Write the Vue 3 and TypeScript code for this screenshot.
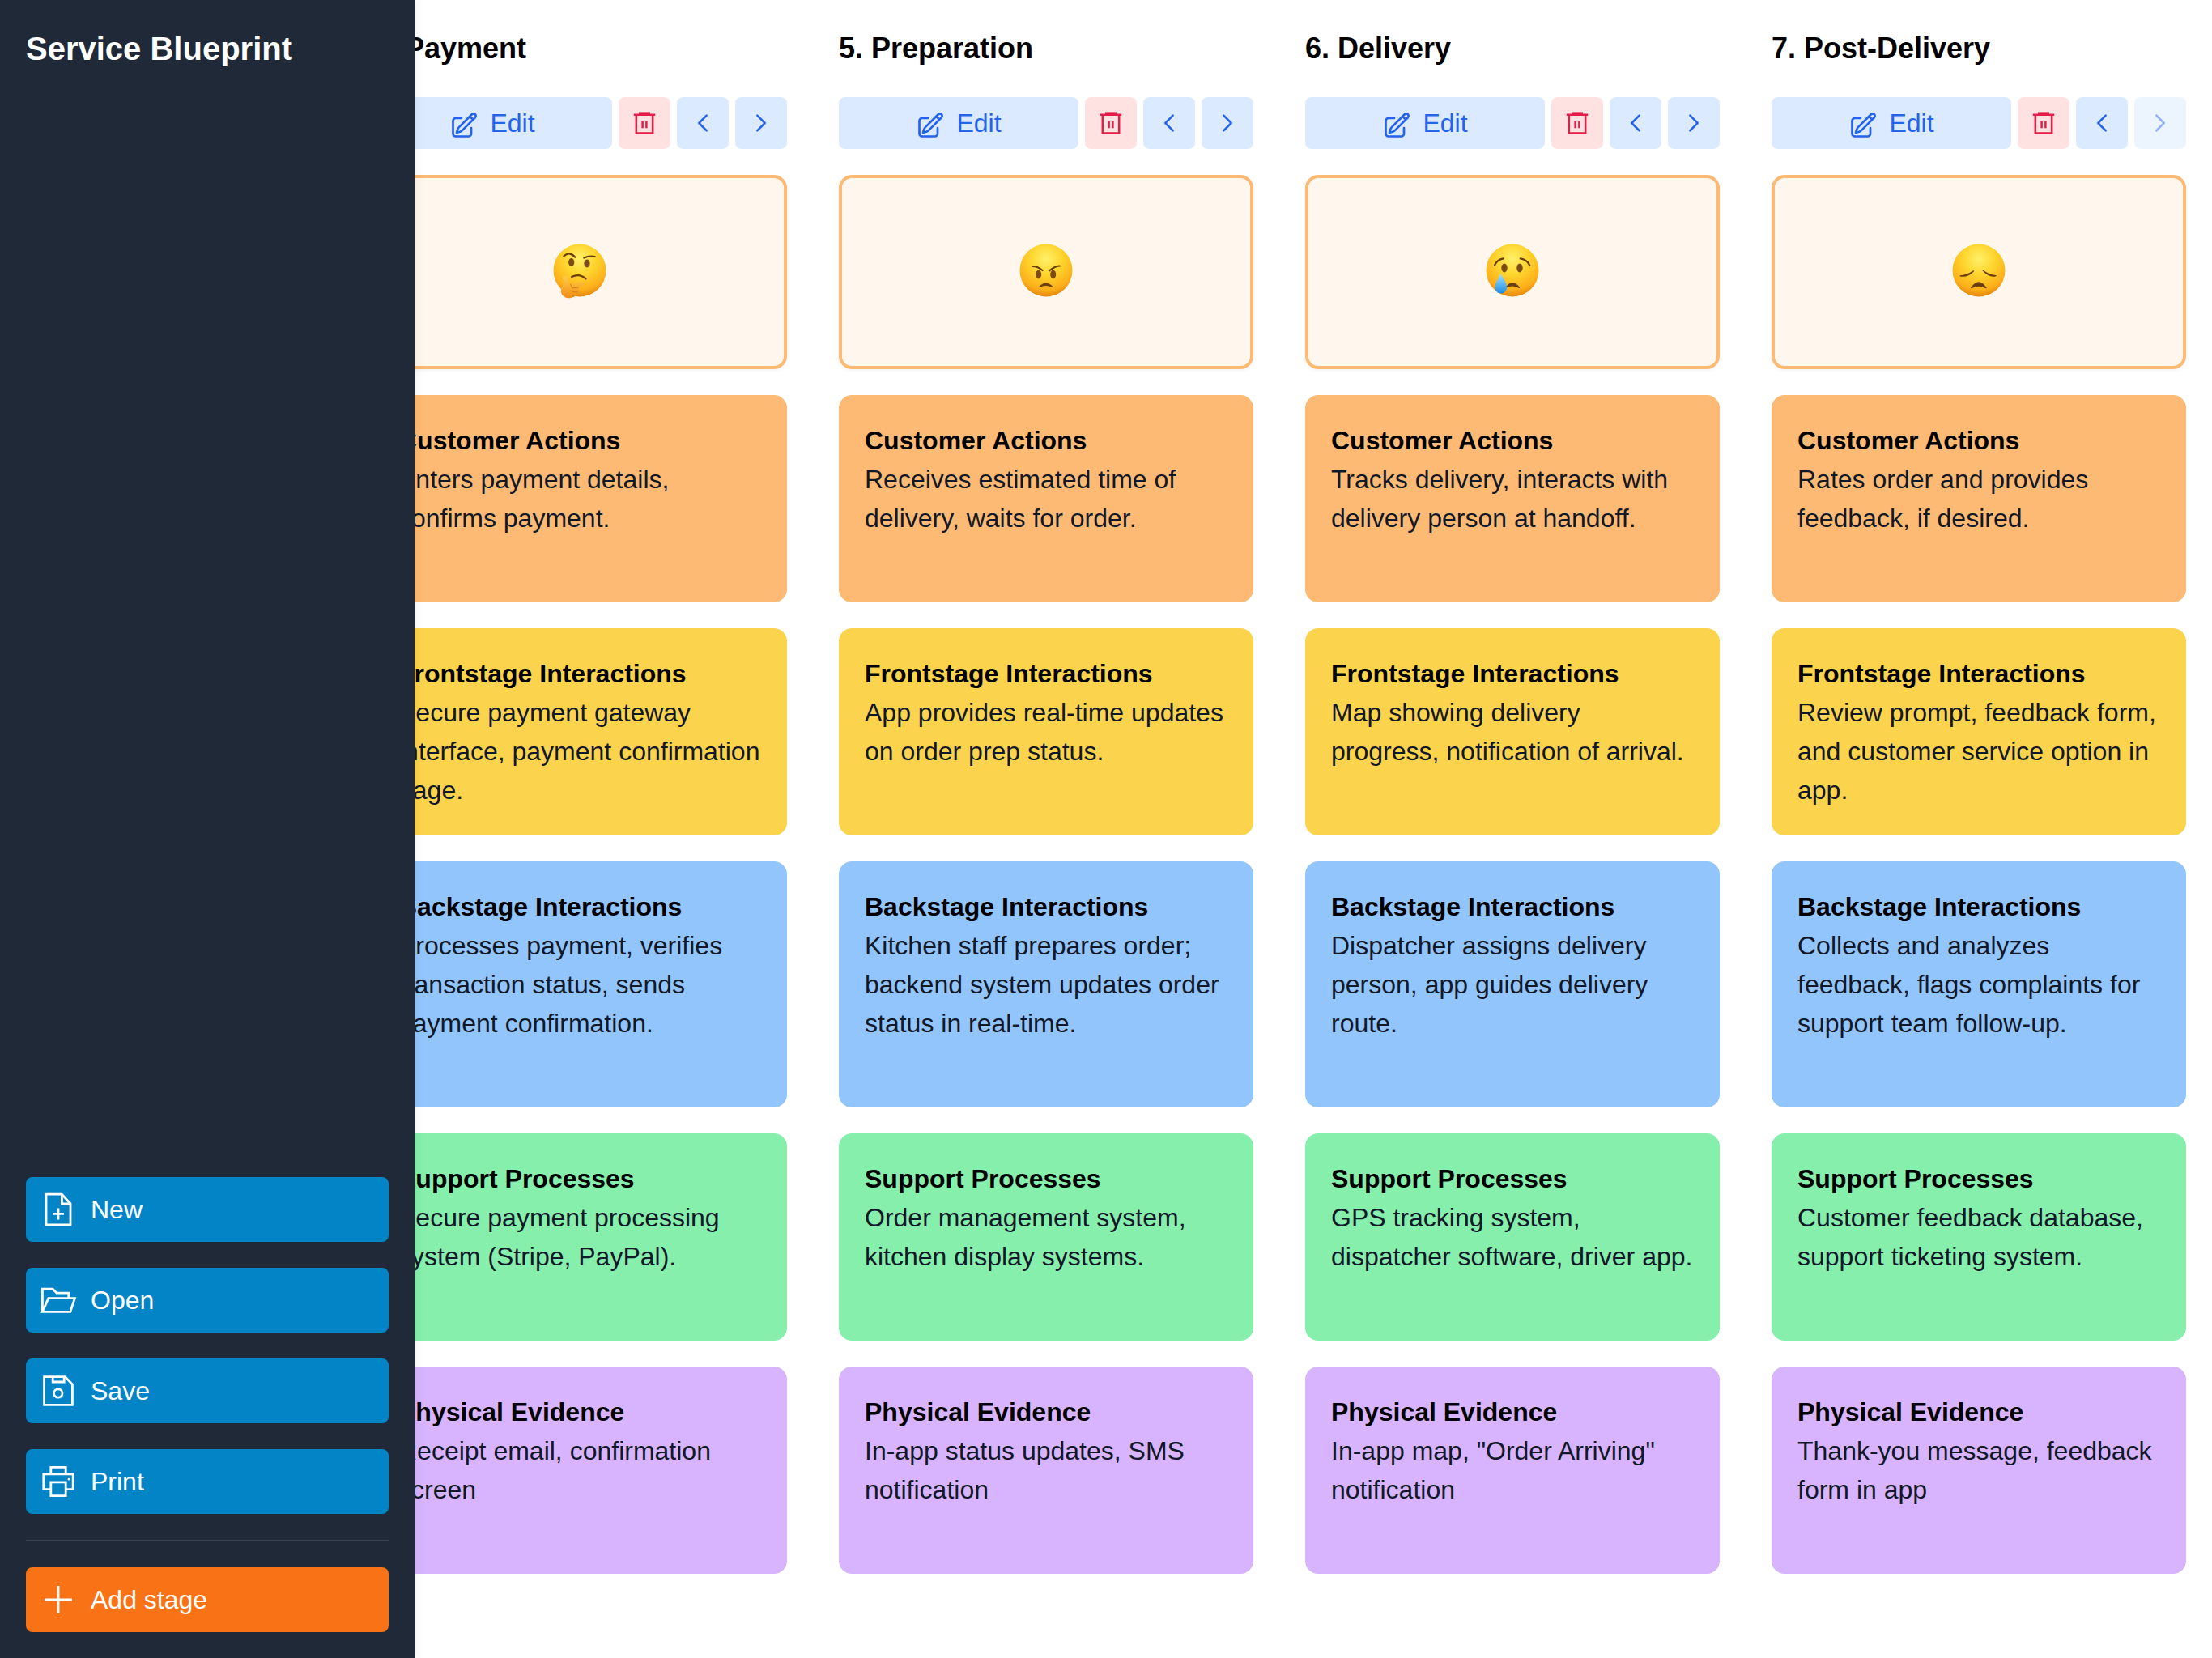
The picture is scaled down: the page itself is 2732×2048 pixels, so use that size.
<script setup lang="ts">
type Mood = 'thinking' | 'angry' | 'crying' | 'sad';

interface Stage {
  title: string;
  mood: Mood;
  last?: boolean;
  notes: string[];
}

const lanes = [
  { key: 'customer', label: 'Customer Actions' },
  { key: 'frontstage', label: 'Frontstage Interactions' },
  { key: 'backstage', label: 'Backstage Interactions' },
  { key: 'support', label: 'Support Processes' },
  { key: 'evidence', label: 'Physical Evidence' },
];

const stages: Stage[] = [
  {
    title: '4. Payment',
    mood: 'thinking',
    notes: [
      'Enters payment details, confirms payment.',
      'Secure payment gateway interface, payment confirmation page.',
      'Processes payment, verifies transaction status, sends payment confirmation.',
      'Secure payment processing system (Stripe, PayPal).',
      'Receipt email, confirmation screen',
    ],
  },
  {
    title: '5. Preparation',
    mood: 'angry',
    notes: [
      'Receives estimated time of delivery, waits for order.',
      'App provides real-time updates on order prep status.',
      'Kitchen staff prepares order; backend system updates order status in real-time.',
      'Order management system, kitchen display systems.',
      'In-app status updates, SMS notification',
    ],
  },
  {
    title: '6. Delivery',
    mood: 'crying',
    notes: [
      'Tracks delivery, interacts with delivery person at handoff.',
      'Map showing delivery progress, notification of arrival.',
      'Dispatcher assigns delivery person, app guides delivery route.',
      'GPS tracking system, dispatcher software, driver app.',
      'In-app map, "Order Arriving" notification',
    ],
  },
  {
    title: '7. Post-Delivery',
    mood: 'sad',
    last: true,
    notes: [
      'Rates order and provides feedback, if desired.',
      'Review prompt, feedback form, and customer service option in app.',
      'Collects and analyzes feedback, flags complaints for support team follow-up.',
      'Customer feedback database, support ticketing system.',
      'Thank-you message, feedback form in app',
    ],
  },
];
</script>

<template>
  <div class="app">
    <aside class="sidebar">
      <h1 class="brand">Service Blueprint</h1>
      <div class="side-actions">
        <button class="side-btn">
          <svg class="side-icon" viewBox="0 0 24 24">
            <path d="M4.5 2.6H14.2L19.5 8.4V21.4H4.5Z" />
            <path d="M14.2 2.6V8.4H19.5" />
            <path d="M12 11.2V18.2M8.5 14.7H15.5" />
          </svg>
          New
        </button>
        <button class="side-btn">
          <svg class="side-icon" viewBox="0 0 24 24">
            <path d="M2.2 19.2V5.1H8.6L11 7.6H18.4V10.8" />
            <path d="M2.2 19.2L5.9 10.8H22.2L19.4 19.2Z" />
          </svg>
          Open
        </button>
        <button class="side-btn">
          <svg class="side-icon" viewBox="0 0 24 24">
            <path d="M3.3 3.3H16.2L20.7 8V20.7H3.3Z" />
            <path d="M8.6 3.3V6.5H15.6V3.3" />
            <circle cx="11.9" cy="13.5" r="2.6" />
          </svg>
          Save
        </button>
        <button class="side-btn">
          <svg class="side-icon" viewBox="0 0 24 24">
            <path d="M7.4 7.4V3.2H16.6V7.4" />
            <path d="M7.4 16.8H2.9V7.4H21.1V16.8H16.6" />
            <path d="M7.4 12.4H16.6V20.8H7.4Z" />
            <circle class="dot" cx="18.5" cy="10.6" r="0.7" />
          </svg>
          Print
        </button>
        <hr class="side-rule" />
        <button class="side-btn add">
          <svg class="side-icon" viewBox="0 0 24 24">
            <path d="M12 3.5V20.5M3.5 12H20.5" />
          </svg>
          Add stage
        </button>
      </div>
    </aside>

    <main class="board">
      <section v-for="stage in stages" :key="stage.title" class="stage">
        <h2 class="stage-title">{{ stage.title }}</h2>

        <div class="toolbar">
          <button class="tool edit">
            <svg class="edit-icon" viewBox="0 0 24 24">
              <path d="M16.862 4.487l1.687-1.688a1.875 1.875 0 112.652 2.652L10.582 16.07a4.5 4.5 0 01-1.897 1.13L6 18l.8-2.685a4.5 4.5 0 011.13-1.897l8.932-8.931zm0 0L19.5 7.125M18 14v4.75A2.25 2.25 0 0115.75 21H5.25A2.25 2.25 0 013 18.75V8.25A2.25 2.25 0 015.25 6H10" />
            </svg>
            Edit
          </button>
          <button class="tool remove">
            <svg class="trash-icon" viewBox="0 0 32 32">
              <path class="lid" d="M9 2.4H23V5H9Z" />
              <path d="M2.8 5.8H29.2M5.8 5.8V28.6H26.2V5.8M13.6 13V22.2M18.4 13V22.2" />
            </svg>
          </button>
          <button class="tool">
            <svg class="chevron" viewBox="0 0 24 24"><path d="M15.75 19.5L8.25 12l7.5-7.5" /></svg>
          </button>
          <button class="tool" :class="{ disabled: stage.last }">
            <svg class="chevron" viewBox="0 0 24 24"><path d="M8.25 4.5l7.5 7.5-7.5 7.5" /></svg>
          </button>
        </div>

        <div class="mood">
          <svg class="emoji" viewBox="0 0 66 70">
            <defs>
              <radialGradient :id="`face-${stage.mood}`" cx="50%" cy="28%" r="74%">
                <stop offset="0%" stop-color="#fff06a" />
                <stop offset="40%" stop-color="#ffd62e" />
                <stop offset="80%" stop-color="#fcae1a" />
                <stop offset="100%" stop-color="#e0800c" />
              </radialGradient>
              <linearGradient :id="`tear-${stage.mood}`" x1="0" y1="0" x2="0" y2="1">
                <stop offset="0%" stop-color="#a6e6ff" />
                <stop offset="100%" stop-color="#1c8be6" />
              </linearGradient>
              <linearGradient :id="`hand-${stage.mood}`" x1="0" y1="0" x2="0" y2="1">
                <stop offset="0%" stop-color="#ffcb4a" />
                <stop offset="100%" stop-color="#f28c12" />
              </linearGradient>
            </defs>
            <circle cx="33" cy="33" r="32.5" :fill="`url(#face-${stage.mood})`" />

            <g v-if="stage.mood === 'thinking'">
              <path class="line" d="M13.3 15.5Q20 8.5 27.3 16.7M38.3 17.5Q45 14.5 51.7 16" />
              <ellipse class="eye" cx="22.7" cy="23" rx="3.6" ry="5" />
              <ellipse class="eye" cx="42" cy="24.5" rx="3.6" ry="5" />
              <path class="line" d="M23 41Q33 36.5 40.5 43.5" />
              <path
                :fill="`url(#hand-${stage.mood})`"
                d="M12 41C14 39 17 40 18 43L21.5 50C26 49.5 32 48 37 47.5C39.5 47.5 39.5 51 37 51.5L31 54C33 56 32 59 30 60C30 63 28 65 26 65.5C22 68 17 68 13 65C9.5 62 9 57 11 53C13 50 13 46 12 41Z"
              />
              <path class="finger" d="M21.5 50L24 55L31 54M24.5 59.5L30 60M23.5 64L26 65.5" />
            </g>

            <g v-else-if="stage.mood === 'angry'">
              <path class="line" d="M16 28Q23 28 28.5 33M49.8 27.5Q43 28 37 33.5" />
              <ellipse class="eye" cx="23.7" cy="38" rx="3.5" ry="5.4" />
              <ellipse class="eye" cx="41.7" cy="38" rx="3.5" ry="5.4" />
              <path class="frown" d="M24.5 53.5Q33 44.5 41 53.5Q33 49.5 24.5 53.5Z" />
            </g>

            <g v-else-if="stage.mood === 'crying'">
              <path class="line" d="M11 26.7Q14 19.5 21.7 18.3M54.3 26.7Q51 19.5 42.7 18.3" />
              <ellipse class="eye" cx="23" cy="30" rx="3.7" ry="5.4" />
              <ellipse class="eye" cx="42" cy="30" rx="3.7" ry="5.4" />
              <path class="frown" d="M25 54Q33.5 43.5 41.5 54.5Q33.5 49.5 25 54Z" />
              <path
                :fill="`url(#tear-${stage.mood})`"
                d="M18.7 36.5C20.5 42 26 47.5 26 54C26 58.2 22.8 61.5 18.7 61.5C14.6 61.5 11.4 58.2 11.4 54C11.4 47.5 17 42 18.7 36.5Z"
              />
            </g>

            <g v-else>
              <path class="frown" d="M10 39.8Q18 39.5 26.5 33.8Q19 42 10 39.8ZM38.2 33.2Q46 39.2 54.2 39.6Q46 42 38.2 33.2Z" />
              <path class="frown" d="M23.7 54.7Q33 41 42 54.7Q33 49.5 23.7 54.7Z" />
            </g>
          </svg>
        </div>

        <article
          v-for="(lane, i) in lanes"
          :key="lane.key"
          class="lane"
          :class="lane.key"
        >
          <h3 class="lane-title">{{ lane.label }}</h3>
          <p class="lane-text">{{ stage.notes[i] }}</p>
        </article>
      </section>
    </main>
  </div>
</template>

<style>
html,
body {
  margin: 0;
  background: #fff;
}
</style>

<style scoped>
.app {
  display: flex;
  width: 2732px;
  height: 2048px;
  overflow: hidden;
  font-family: "Liberation Sans", Arial, sans-serif;
  font-size: 32px;
  line-height: 48px;
}

.sidebar {
  position: relative;
  z-index: 2;
  flex: none;
  display: flex;
  flex-direction: column;
  justify-content: space-between;
  box-sizing: border-box;
  width: 512px;
  padding: 32px;
  background: #1f2937;
  box-shadow: 0 0 12px rgba(0, 0, 0, 0.08);
}

.brand {
  margin: 0;
  font-size: 40px;
  line-height: 56px;
  font-weight: 700;
  color: #fff;
}

.side-actions {
  display: flex;
  flex-direction: column;
  gap: 32px;
}

.side-btn {
  display: flex;
  align-items: center;
  gap: 16px;
  height: 80px;
  padding: 0 16px;
  border: 0;
  border-radius: 8px;
  background: #0284c7;
  color: #fff;
  font: inherit;
  text-align: left;
}

.side-btn.add {
  background: #f97316;
}

.side-icon {
  flex: none;
  width: 48px;
  height: 48px;
  fill: none;
  stroke: #fff;
  stroke-width: 1.4;
}

.side-icon .dot {
  fill: #fff;
  stroke: none;
}

.side-rule {
  width: 100%;
  height: 2px;
  margin: 0;
  border: 0;
  background: #374151;
}

.board {
  flex: 1;
  min-width: 0;
  display: flex;
  justify-content: flex-end;
  gap: 64px;
  box-sizing: border-box;
  padding: 32px;
  overflow: hidden;
}

.stage {
  flex: none;
  display: flex;
  flex-direction: column;
  gap: 32px;
  width: 512px;
}

.stage-title {
  margin: 0;
  font-size: 36px;
  line-height: 56px;
  font-weight: 700;
  color: #000;
}

.toolbar {
  display: flex;
  gap: 8px;
  height: 64px;
}

.tool {
  flex: none;
  display: flex;
  align-items: center;
  justify-content: center;
  width: 64px;
  padding: 0;
  border: 0;
  border-radius: 8px;
  background: #dbeafe;
  color: #2563eb;
  font: inherit;
}

.tool.edit {
  flex: 1;
  gap: 14px;
}

.tool.remove {
  background: #fee2e2;
}

.tool.disabled {
  opacity: 0.5;
}

.edit-icon {
  width: 36px;
  height: 36px;
  margin-top: 6px;
  fill: none;
  stroke: #2563eb;
  stroke-width: 1.8;
  stroke-linecap: round;
  stroke-linejoin: round;
}

.trash-icon {
  width: 32px;
  height: 32px;
  fill: none;
  stroke: #e11d48;
  stroke-width: 2.5;
}

.trash-icon .lid {
  fill: #e11d48;
  stroke: none;
}

.chevron {
  width: 30px;
  height: 30px;
  fill: none;
  stroke: #2563eb;
  stroke-width: 2;
  stroke-linecap: round;
  stroke-linejoin: round;
}

.mood {
  display: flex;
  align-items: center;
  justify-content: center;
  box-sizing: border-box;
  height: 240px;
  border: 4px solid #fdba74;
  border-radius: 16px;
  background: #fff7ed;
  box-shadow: 0 2px 4px rgba(0, 0, 0, 0.05);
}

.emoji {
  width: 66px;
  height: 70px;
}

.line,
.finger {
  fill: none;
  stroke: #6b3f0c;
  stroke-width: 2.2;
  stroke-linecap: round;
}

.finger {
  stroke: #c8801a;
  stroke-width: 1;
}

.eye {
  fill: #7c4c12;
}

.frown {
  fill: #6b3f0c;
  stroke: #6b3f0c;
  stroke-width: 1.2;
  stroke-linejoin: round;
}

.lane {
  box-sizing: border-box;
  height: 256px;
  padding: 32px;
  border-radius: 16px;
}

.lane.customer {
  background: #fdba74;
}

.lane.frontstage {
  background: #fcd34d;
}

.lane.backstage {
  height: 304px;
  background: #93c5fd;
}

.lane.support {
  background: #86efac;
}

.lane.evidence {
  background: #d8b4fe;
}

.lane-title {
  margin: 0;
  font-size: 32px;
  line-height: 48px;
  font-weight: 700;
  color: #000;
}

.lane-text {
  margin: 0;
  color: #111827;
}
</style>
